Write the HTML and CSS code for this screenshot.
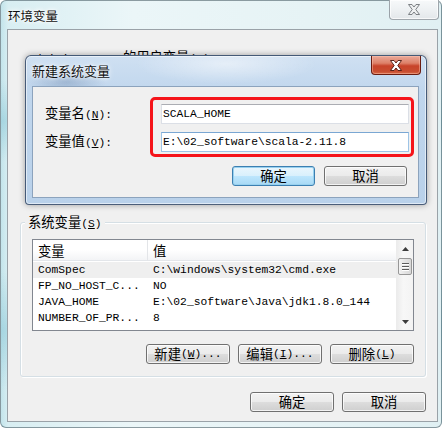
FILE: index.html
```html
<!DOCTYPE html>
<html lang="zh-CN">
<head>
<meta charset="utf-8">
<title>环境变量</title>
<link rel="stylesheet" href="styles.css">
</head>
<body>
<div class="win">
  <div class="win-title">
    <span class="win-title-text">环境变量</span>
    <div class="close-btn close-grey">
      <svg width="14" height="11" viewBox="0 0 14 11"><path d="M1.5 0.5H5L7 3L9 0.5H12.5L8.8 5.5L12.5 10.5H9L7 8L5 10.5H1.5L5.2 5.5Z" fill="#eef0f1" stroke="#6f7478" stroke-width="0.9"/></svg>
    </div>
  </div>
  <div class="win-client">
    <div class="user-area">
      <div class="user-label">Administrator <span class="zh">的用户变量</span>(<u>U</u>)</div>
    </div>
    <div class="group">
      <div class="group-label"><span class="zh">系统变量</span>(<u>S</u>)</div>
      <div class="list">
        <div class="list-main">
          <div class="list-head">
            <div class="col c1"><span class="zh">变量</span></div>
            <div class="col c2"><span class="zh">值</span></div>
          </div>
          <div class="rows">
            <div class="row hot"><div class="col c1">ComSpec</div><div class="col c2">C:\windows\system32\cmd.exe</div></div>
            <div class="row"><div class="col c1">FP_NO_HOST_C...</div><div class="col c2">NO</div></div>
            <div class="row"><div class="col c1">JAVA_HOME</div><div class="col c2">E:\02_software\Java\jdk1.8.0_144</div></div>
            <div class="row"><div class="col c1">NUMBER_OF_PR...</div><div class="col c2">8</div></div>
          </div>
        </div>
        <div class="vscroll">
          <div class="sb-arrow"><svg width="7" height="4" viewBox="0 0 7 4"><path d="M0 4L3.5 0L7 4Z" fill="#3c3c3c"/></svg></div>
          <div class="sb-track">
            <div class="sb-thumb"><i></i><i></i><i></i></div>
          </div>
          <div class="sb-arrow"><svg width="7" height="4" viewBox="0 0 7 4"><path d="M0 0L3.5 4L7 0Z" fill="#3c3c3c"/></svg></div>
        </div>
      </div>
      <div class="btn-row">
        <button class="btn w84"><span class="zh">新建</span>(<u>W</u>)...</button>
        <button class="btn w84"><span class="zh">编辑</span>(<u>I</u>)...</button>
        <button class="btn w84"><span class="zh">删除</span>(<u>L</u>)</button>
      </div>
    </div>
    <div class="footer">
      <button class="btn w84"><span class="zh">确定</span></button>
      <button class="btn w84"><span class="zh">取消</span></button>
    </div>
  </div>
</div>

<div class="dialog">
  <div class="dlg-title">
    <span class="dlg-title-text">新建系统变量</span>
    <div class="close-btn close-red">
      <svg width="14" height="11" viewBox="0 0 14 11"><path d="M1.5 0.5H5L7 3L9 0.5H12.5L8.8 5.5L12.5 10.5H9L7 8L5 10.5H1.5L5.2 5.5Z" fill="#ffffff" stroke="#4a150c" stroke-width="0.9"/></svg>
    </div>
  </div>
  <div class="dlg-client">
    <div class="form">
      <label class="lbl"><span class="zh">变量名</span>(<u>N</u>):</label>
      <div class="input">SCALA_HOME</div>
      <label class="lbl"><span class="zh">变量值</span>(<u>V</u>):</label>
      <div class="input focus">E:\02_software\scala-2.11.8</div>
    </div>
    <div class="dlg-btns">
      <button class="btn w83 default"><span class="zh">确定</span></button>
      <button class="btn w83"><span class="zh">取消</span></button>
    </div>
  </div>
  <div class="mark"></div>
</div>
</body>
</html>
```

FILE: styles.css
```css
* { box-sizing: border-box; }
html, body { margin: 0; padding: 0; }
body {
  width: 448px;
  height: 430px;
  overflow: hidden;
  position: relative;
  background: #ffffff;
  font-family: "Liberation Mono", "Noto Sans CJK SC", monospace;
  font-size: 11.3px;
  color: #000;
}
.zh {
  font-family: "Noto Sans CJK SC", sans-serif;
  font-size: 13.3px;
}
u { text-decoration: underline; text-underline-offset: 1px; }

/* outer window */
.win {
  width: 442px;
  height: 428px;
  border: 1px solid rgba(60, 80, 90, 0.55);
  border-radius: 6px;
  background:
    radial-gradient(ellipse 60px 40px at 2px 120px, rgba(140, 200, 215, 0.55), transparent),
    radial-gradient(ellipse 60px 60px at 2px 330px, rgba(140, 200, 215, 0.55), transparent),
    linear-gradient(to right, #c3e4eb 0, #d8eef2 7px, #ebf6f8 30%, #e6f3f5 70%, #e0f0f3 100%);
  display: flex;
  flex-direction: column;
}
.win-title {
  height: 28px;
  display: flex;
  justify-content: space-between;
  align-items: flex-start;
  padding-left: 7px;
}
.win-title-text {
  font-family: "Noto Sans CJK SC", sans-serif;
  font-size: 12.5px;
  line-height: 16px;
  margin-top: 7px;
  color: #111;
  text-shadow: 0 0 6px #fff, 0 0 4px #fff, 0 0 2px #fff;
}
.close-btn {
  width: 50px;
  height: 20px;
  border-radius: 0 0 4px 4px;
  display: flex;
  align-items: center;
  justify-content: center;
}
.close-grey {
  margin-top: -1px;
  margin-right: 2px;
  border: 1px solid rgba(90, 100, 110, 0.55);
  border-top: none;
  background: linear-gradient(to bottom, #f7f9fa 0%, #eef1f3 50%, #e3e7ea 100%);
  box-shadow: inset 0 0 0 1px rgba(255, 255, 255, 0.7);
}
.win-client {
  margin-left: 6px;
  width: 431px;
  height: 393px;
  border: 1px solid #9aa2a8;
  background: #f0f0f0;
  display: flex;
  flex-direction: column;
}
.user-area {
  height: 192px;
  padding: 19px 0 0 20px;
}
.user-label {
  line-height: 16px;
}

/* group box */
.group {
  margin: 0 11px 0 12px;
  border: 1px solid #d5dfe5;
  border-radius: 3px;
  padding: 0 11px 12px 11px;
  box-shadow: inset 1px 1px 0 #fff, 1px 1px 0 #fff;
}
.group-label {
  display: table;
  margin: -9px 0 0 -7px;
  padding: 0 3px;
  line-height: 16px;
  height: 16px;
  background: #f0f0f0;
}

/* list view */
.list {
  margin-top: 7px;
  height: 92px;
  border: 1px solid #828790;
  background: #fff;
  display: flex;
}
.list-main {
  flex: 1;
  display: flex;
  flex-direction: column;
}
.list-head {
  height: 21px;
  display: flex;
  align-items: center;
  background: linear-gradient(to bottom, #ffffff 0%, #ffffff 50%, #f3f4f6 100%);
  border-bottom: 1px solid #e3e6ea;
}
.list-head .c1 {
  border-right: 1px solid #e3e5e8;
  height: 21px;
  display: flex;
  align-items: center;
}
.col { white-space: nowrap; overflow: hidden; }
.c1 { width: 115px; padding-left: 5px; }
.c2 { flex: 1; padding-left: 5px; }
.rows { padding-top: 1px; }
.row {
  height: 16px;
  display: flex;
  align-items: center;
  line-height: 16px;
}
.row.hot { background: #efefef; }

.vscroll {
  width: 17px;
  display: flex;
  flex-direction: column;
  background: linear-gradient(to right, #ececec, #f7f7f7 40%, #f3f3f3);
  border-left: 1px solid #ececec;
}
.sb-arrow {
  height: 17px;
  display: flex;
  align-items: center;
  justify-content: center;
}
.sb-track {
  flex: 1;
  padding: 1px 1px 0 1px;
}
.sb-thumb {
  height: 17px;
  border: 1px solid #979797;
  border-radius: 2px;
  background: linear-gradient(to right, #f3f3f3, #e4e4e4 50%, #d8d8d8);
  display: flex;
  flex-direction: column;
  align-items: center;
  justify-content: center;
  gap: 2px;
}
.sb-thumb i {
  display: block;
  width: 7px;
  height: 1px;
  background: #5c5c5c;
  box-shadow: 0 1px 0 #fff;
}

/* buttons */
.btn {
  height: 20px;
  padding: 0;
  border: 1px solid #707070;
  border-radius: 3px;
  background: linear-gradient(to bottom, #f2f2f2 0%, #ebebeb 49%, #dddddd 50%, #cfcfcf 100%);
  box-shadow: inset 0 0 0 1px rgba(255, 255, 255, 0.75);
  font-family: "Liberation Mono", "Noto Sans CJK SC", monospace;
  font-size: 11.3px;
  color: #000;
  line-height: 16px;
  display: flex;
  align-items: center;
  justify-content: center;
}
.btn.default {
  border-color: #3c7fb1;
  box-shadow: inset 0 0 0 1px #98d1ef;
  background: linear-gradient(to bottom, #eaf6fd 0%, #d9f0fc 49%, #bee6fd 50%, #a7d9f5 100%);
}
.w84 { width: 84px; }
.w83 { width: 83px; }
.btn-row {
  margin-top: 13px;
  display: flex;
  justify-content: flex-end;
  gap: 8px;
}
.footer {
  margin: 15px 11px 0 0;
  display: flex;
  justify-content: flex-end;
  gap: 8px;
}

/* new variable dialog (window over the first one) */
.dialog {
  position: absolute;
  left: 25px;
  top: 55px;
  width: 402px;
  height: 150px;
  border: 1px solid rgba(30, 50, 80, 0.75);
  border-radius: 6px 6px 4px 4px;
  background:
    radial-gradient(ellipse 40px 14px at 40px 26px, rgba(90, 120, 160, 0.35), transparent),
    radial-gradient(ellipse 90px 20px at 200px 8px, rgba(255, 255, 255, 0.5), transparent),
    linear-gradient(to bottom, #cfe0f2 0%, #c0d6ed 25%, #b9d1ea 100%);
  box-shadow: 0 0 6px rgba(0, 0, 0, 0.35), inset 0 0 0 1px rgba(255, 255, 255, 0.55);
  display: flex;
  flex-direction: column;
}
.dlg-title {
  height: 30px;
  display: flex;
  justify-content: space-between;
  align-items: flex-start;
  padding-left: 6px;
}
.dlg-title-text {
  font-family: "Noto Sans CJK SC", sans-serif;
  font-size: 13px;
  line-height: 16px;
  margin-top: 7px;
  color: #111;
  text-shadow: 0 0 6px #fff, 0 0 3px #fff;
}
.close-red {
  margin-right: 5px;
  height: 19px;
  border: 1px solid #6a1c10;
  border-top: none;
  background: linear-gradient(to bottom, #eaa999 0%, #dd8068 40%, #c8432a 55%, #c84d30 85%, #d86a48 100%);
  box-shadow: inset 0 0 0 1px rgba(255, 200, 180, 0.45);
}
.dlg-client {
  margin-left: 6px;
  width: 387px;
  height: 112px;
  border: 1px solid #8ca3bd;
  background: #f0f0f0;
  padding: 17px 9px 0 12px;
}
.form {
  display: grid;
  grid-template-columns: 116px 1fr;
  row-gap: 8px;
  align-items: center;
}
.lbl { line-height: 16px; }
.input {
  height: 20px;
  border: 1px solid #dbdfe6;
  border-top-color: #abadb3;
  background: #fff;
  padding-left: 1px;
  line-height: 18px;
  white-space: nowrap;
}
.input.focus {
  border-color: #9ec4e6;
  border-top-color: #7aa7d3;
}
.dlg-btns {
  margin: 14px 2px 0 0;
  display: flex;
  justify-content: flex-end;
  gap: 9px;
}
.mark {
  position: absolute;
  left: 124px;
  top: 41px;
  width: 264px;
  height: 60px;
  border: 3px solid #f5141a;
  border-radius: 5px;
}
```
